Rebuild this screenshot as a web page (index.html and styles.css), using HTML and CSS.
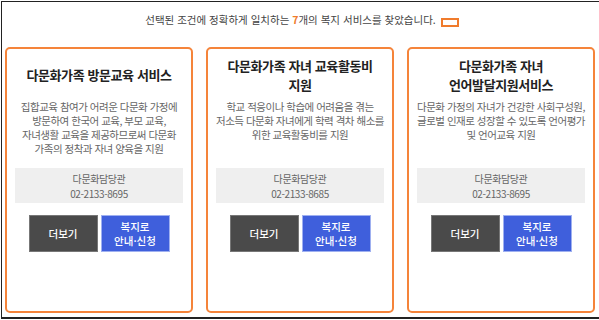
FILE: index.html
```html
<!DOCTYPE html>
<html lang="ko">
<head>
    <meta charset="UTF-8">
    <meta name="viewport" content="width=device-width, initial-scale=1.0">
    <title>복지 서비스 검색 결과</title>
    <link rel="stylesheet" href="styles.css">
</head>
<body>

    <div class="marco">
        <!-- Resumen de resultados -->
        <p class="resultado">선택된 조건에 정확하게 일치하는 <em>7</em>개의 복지 서비스를 찾았습니다. <button class="btn-mas"></button></p>

        <div class="tarjetas">
            <div class="tarjeta">
                <h2 class="titulo">다문화가족 방문교육 서비스</h2>
                <p class="descripcion">집합교육 참여가 어려운 다문화 가정에 방문하여 한국어 교육, 부모 교육, 자녀생활 교육을 제공하므로써 다문화 가족의 정착과 자녀 양육을 지원</p>
                <div class="contacto">
                    <span>다문화담당관</span>
                    <span>02-2133-8695</span>
                </div>
                <div class="botones">
                    <button class="btn-ver">더보기</button>
                    <button class="btn-solicitar">복지로<br>안내·신청</button>
                </div>
            </div>

            <div class="tarjeta">
                <h2 class="titulo">다문화가족 자녀 교육활동비<br>지원</h2>
                <p class="descripcion">학교 적응이나 학습에 어려움을 겪는 저소득 다문화 자녀에게 학력 격차 해소를 위한 교육활동비를 지원</p>
                <div class="contacto">
                    <span>다문화담당관</span>
                    <span>02-2133-8685</span>
                </div>
                <div class="botones">
                    <button class="btn-ver">더보기</button>
                    <button class="btn-solicitar">복지로<br>안내·신청</button>
                </div>
            </div>

            <div class="tarjeta">
                <h2 class="titulo">다문화가족 자녀<br>언어발달지원서비스</h2>
                <p class="descripcion">다문화 가정의 자녀가 건강한 사회구성원, 글로벌 인재로 성장할 수 있도록 언어평가 및 언어교육 지원</p>
                <div class="contacto">
                    <span>다문화담당관</span>
                    <span>02-2133-8695</span>
                </div>
                <div class="botones">
                    <button class="btn-ver">더보기</button>
                    <button class="btn-solicitar">복지로<br>안내·신청</button>
                </div>
            </div>
        </div>
    </div>

</body>
</html>
```

FILE: styles.css
```css
/* Estilos generales */
body {
    margin: 0;
    padding: 0;
    font-family: "Noto Sans CJK KR", "Noto Sans", sans-serif;
    background-color: #fff;
    color: #333;
}

.marco {
    box-sizing: border-box;
    height: 318px;
    margin: 1px 0 0 1px;
    border-left: 1px solid #222;
    border-top: 1px solid #222;
    border-bottom: 2px solid #222;
    padding: 0 0 0 3px;
}

/* Texto del resultado */
.resultado {
    margin: 0;
    height: 45px;
    padding-top: 9px;
    box-sizing: border-box;
    text-align: center;
    font-size: 10.5px;
    line-height: 18px;
    color: #444;
}

.resultado em {
    font-style: normal;
    color: #f07b2c;
    font-weight: bold;
}

.btn-mas {
    width: 18px;
    height: 9px;
    padding: 0;
    border: 2px solid #f07b2c;
    background-color: #fff;
    margin-left: 2px;
    vertical-align: -1px;
}

/* Tarjetas */
.tarjetas {
    display: flex;
    gap: 13px;
}

.tarjeta {
    box-sizing: border-box;
    width: 188px;
    height: 266px;
    border: 2px solid #f5843a;
    border-radius: 5px;
    padding: 0 8px;
    display: flex;
    flex-direction: column;
    text-align: center;
    word-break: keep-all;
}

.titulo {
    margin: 0;
    height: 51px;
    display: flex;
    align-items: center;
    justify-content: center;
    font-size: 13px;
    line-height: 19px;
    letter-spacing: -0.4px;
    color: #222;
}

.descripcion {
    margin: 0 -1px;
    height: 68px;
    font-size: 10.5px;
    line-height: 14px;
    letter-spacing: -0.5px;
    color: #666;
}

.contacto {
    background-color: #efefef;
    height: 35px;
    display: flex;
    flex-direction: column;
    justify-content: center;
    font-size: 10px;
    line-height: 15px;
    letter-spacing: -0.4px;
    color: #666;
}

/* Botones */
.botones {
    display: flex;
    justify-content: center;
    gap: 3px;
    margin-top: 12px;
}

.botones button {
    width: 69px;
    height: 37px;
    padding: 0;
    font-family: inherit;
    font-size: 10.5px;
    line-height: 14px;
    font-weight: 500;
    color: #fff;
    cursor: pointer;
}

.btn-ver {
    background-color: #4a4a4a;
    border: 1px solid #777;
}

.btn-solicitar {
    background-color: #3f5fdc;
    border: 1px solid #9fb0f0;
}
```
